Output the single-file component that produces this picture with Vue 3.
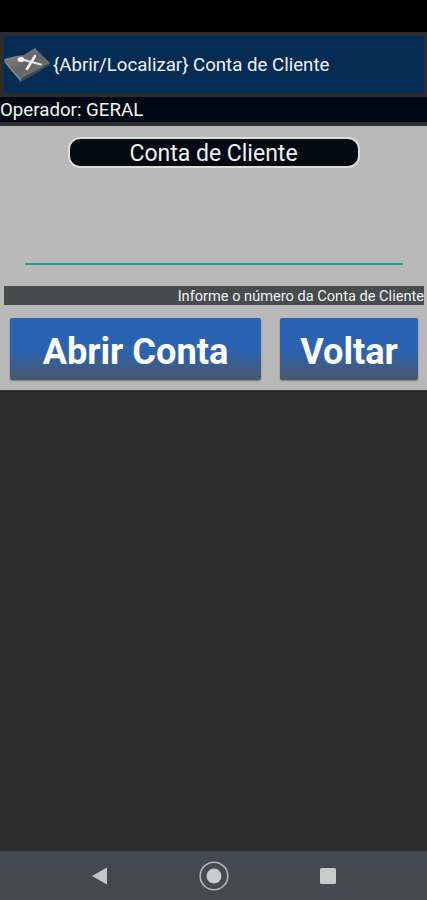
<script setup>
const title = '{Abrir/Localizar} Conta de Cliente'
</script>

<template>
  <div class="screen">
    <div class="status"></div>
    <header class="head">
      <div class="head-inner">
        <svg class="logo" width="50" height="36" viewBox="0 0 50 36">
          <defs>
            <linearGradient id="slab" x1="0" y1="0" x2="1" y2="1">
              <stop offset="0" stop-color="#8e9092" />
              <stop offset="0.5" stop-color="#626467" />
              <stop offset="1" stop-color="#77797b" />
            </linearGradient>
          </defs>
          <path d="M0 11 L12 8 L20 7 L31 0 L46 15 L17 31 Z" fill="url(#slab)" />
          <path d="M0 11 L17 31 L17 34 L1 15 Z" fill="#88898b" />
          <path d="M17 31 L46 15 L46 17 L17 34 Z" fill="#45484b" />
          <path d="M18 11.500 L37 16.500" stroke="#e6e6e6" stroke-width="2" stroke-linecap="round" />
          <path d="M31 8 L23 21" stroke="#ececec" stroke-width="2.600" stroke-linecap="round" />
          <ellipse cx="17" cy="11.500" rx="3.500" ry="2.500" fill="#f6f6f6" />
        </svg>
        <span class="title">{{ title }}</span>
      </div>
    </header>
    <div class="operator">Operador: GERAL</div>
    <main class="form">
      <div class="pill">Conta de Cliente</div>
      <div class="field"></div>
      <div class="hint">Informe o número da Conta de Cliente</div>
      <div class="actions">
        <button class="btn open">Abrir Conta</button>
        <button class="btn back">Voltar</button>
      </div>
    </main>
    <div class="empty"></div>
    <nav class="nav">
      <svg width="16" height="18" viewBox="0 0 16 18"><path d="M15 0.500 V17.500 L0 9 Z" fill="#c4c8c9" /></svg>
      <svg width="30" height="30" viewBox="0 0 30 30">
        <circle cx="15" cy="15" r="13.800" fill="none" stroke="#b4b8b9" stroke-width="1.600" />
        <circle cx="15" cy="15" r="7.500" fill="#c8cccd" />
      </svg>
      <svg width="18" height="18" viewBox="0 0 18 18"><rect x="1" y="1" width="16" height="16" rx="1.500" fill="#c8cccd" /></svg>
    </nav>
  </div>
</template>

<style scoped>
.screen {
  width: 427px;
  height: 900px;
  display: flex;
  flex-direction: column;
  background: #2b2b2b;
  font-family: Roboto, "Liberation Sans", sans-serif;
  overflow: hidden;
}
.status {
  height: 32px;
  background: #000;
}
.head {
  height: 65px;
  box-sizing: border-box;
  padding: 4px 3px 4px 4px;
  background: #2c2c2c;
}
.head-inner {
  height: 100%;
  display: flex;
  align-items: center;
  background: #052c54;
  color: #f0f2f5;
  font-size: 18.650px;
}
.logo {
  flex: none;
  margin-top: 2px;
}
.title {
  margin-left: -1px;
  white-space: nowrap;
}
.operator {
  height: 25px;
  line-height: 26px;
  background: #010a14;
  color: #f4f4f4;
  font-size: 18.700px;
  white-space: nowrap;
}
.form {
  height: 269px;
  box-sizing: border-box;
  border-top: 4px solid #2f2f2f;
  border-bottom: 1px solid #333;
  padding-top: 11px;
  background: #b9b9b9;
  display: flex;
  flex-direction: column;
}
.pill {
  align-self: center;
  width: 292px;
  height: 31px;
  box-sizing: border-box;
  border: 2px solid #dcdcdc;
  border-radius: 12px;
  background: #020b14;
  color: #f0f0f0;
  font-size: 23px;
  line-height: 30px;
  text-align: center;
}
.field {
  height: 1.500px;
  margin: 95px 24px 0 25px;
  background: #1f9e8b;
}
.hint {
  height: 19px;
  margin: 21px 3px 0 4px;
  background: #484c4d;
  color: #f0f0f0;
  font-size: 14.600px;
  line-height: 20px;
  text-align: right;
  white-space: nowrap;
  overflow: hidden;
}
.actions {
  display: flex;
  gap: 19px;
  margin: 13px 9px 0 10px;
}
.btn {
  height: 62px;
  padding: 5px 0 0;
  border: 0;
  border-radius: 2px;
  background: linear-gradient(#2b63b3 0%, #2b63b3 50%, #48586a 100%);
  box-shadow: 0 1px 2px rgba(0, 0, 0, 0.350);
  color: #fff;
  font-family: inherit;
  font-size: 36.200px;
  font-weight: 700;
}
.open {
  width: 251px;
}
.back {
  flex: 1;
}
.empty {
  flex: 1;
  background: #2b2b2b;
}
.nav {
  height: 49px;
  padding: 0 90px 0 92px;
  display: flex;
  align-items: center;
  justify-content: space-between;
  background: #434b50;
}
</style>
